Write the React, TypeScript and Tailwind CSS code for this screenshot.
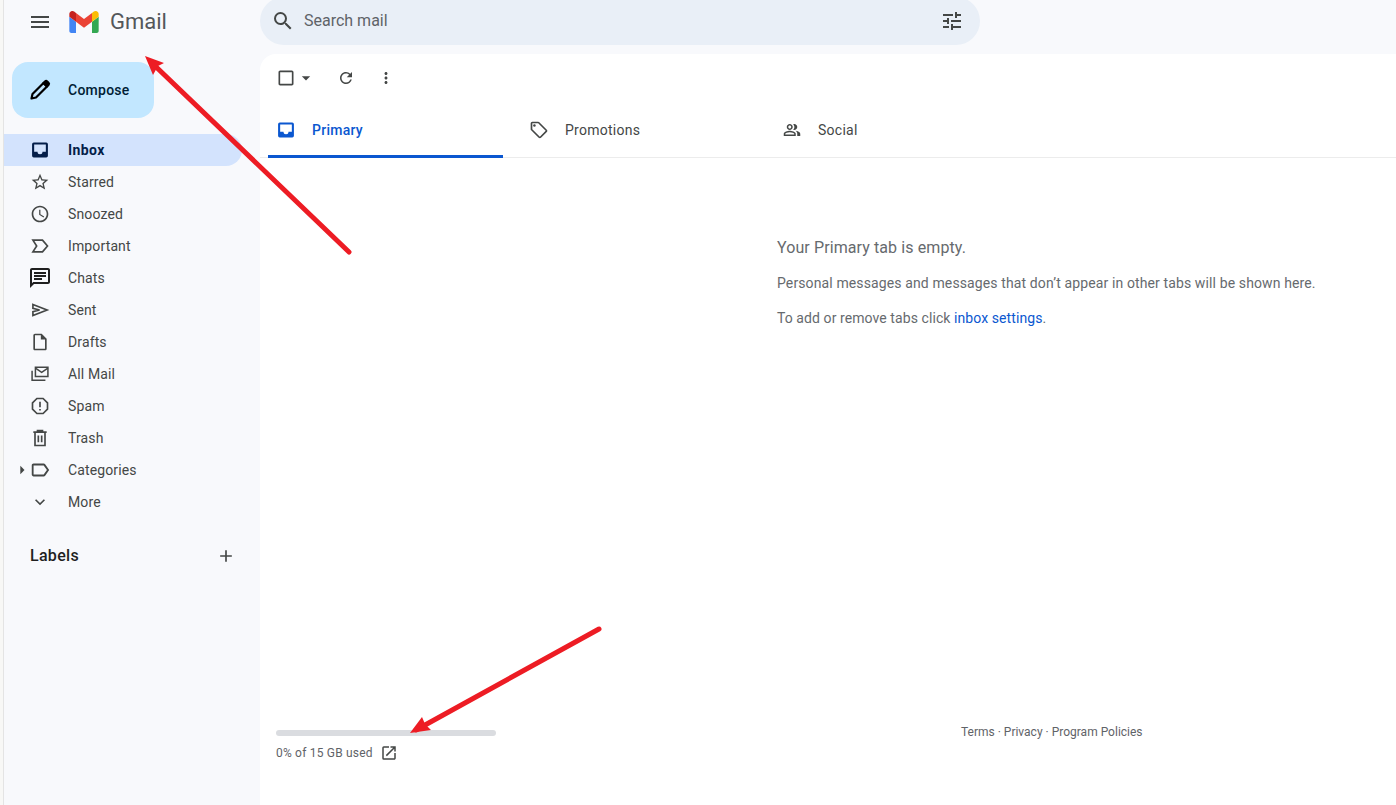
import React from 'react'
import {
  MdMenu,
  MdSearch,
  MdTune,
  MdStarBorder,
  MdOutlineAccessTime,
  MdOutlineChat,
  MdOutlineInsertDriveFile,
  MdOutlineLabel,
  MdExpandMore,
  MdAdd,
  MdCheckBoxOutlineBlank,
  MdArrowDropDown,
  MdRefresh,
  MdMoreVert,
  MdOutlineLocalOffer,
  MdOutlinePeopleAlt,
  MdOpenInNew,
  MdArrowRight,
} from 'react-icons/md'

const GmailLogo = () => (
  <svg viewBox="52 42 88 66" className="w-[30px] h-[22px]">
    <path fill="#4285f4" d="M58 108h14V74L52 59v43c0 3.32 2.69 6 6 6" />
    <path fill="#34a853" d="M120 108h14c3.32 0 6-2.69 6-6V59l-20 15" />
    <path fill="#fbbc04" d="M120 48v26l20-15v-8c0-7.42-8.47-11.65-14.4-7.2" />
    <path fill="#ea4335" d="M72 74V48l24 18 24-18v26L96 92" />
    <path fill="#c5221f" d="M52 51v8l20 15V48l-5.6-4.2c-5.94-4.45-14.4-.22-14.4 7.2" />
  </svg>
)

const PencilIcon = () => (
  <svg viewBox="0 0 24 24" className="w-6 h-6" fill="none" stroke="#000" strokeWidth="2.2" strokeLinejoin="round">
    <path d="M3.5 20.5l1-4.5L15.5 5l3.5 3.5L8 19.5z" />
    <path fill="#000" d="M15.5 5l1.5-1.5a1.6 1.6 0 0 1 2.2 0l1.3 1.3a1.6 1.6 0 0 1 0 2.2L19 8.5z" />
  </svg>
)

const InboxIcon = ({ color, bg }: { color: string; bg: string }) => (
  <svg viewBox="0 0 24 24" className="w-5 h-5">
    <path fill={color} d="M19.5 3h-15A2 2 0 0 0 2.5 5v14a2 2 0 0 0 2 2h15a2 2 0 0 0 2-2V5a2 2 0 0 0-2-2z" />
    <path fill={bg} d="M5 5.5h14V14h-4a3 3 0 0 1-6 0H5z" />
  </svg>
)

const ImportantIcon = () => (
  <svg viewBox="0 0 24 24" className="w-5 h-5" fill="none" stroke="#444746" strokeWidth="2">
    <path d="M3.5 5h11.5l6 7-6 7H3.5l4.5-7z" />
  </svg>
)

const SentIcon = () => (
  <svg viewBox="0 0 24 24" className="w-5 h-5" fill="none" stroke="#444746" strokeWidth="2">
    <path d="M3.5 5.5l17 6.5-17 6.5v-4.5l8-2-8-2z" />
  </svg>
)

const AllMailIcon = () => (
  <svg viewBox="0 0 24 24" className="w-[22px] h-[22px]" fill="none" stroke="#444746" strokeWidth="1.8">
    <path d="M6.5 4h15v11h-15z" />
    <path d="M6.5 5l7.5 5 7.5-5" />
    <path d="M2.5 8v11.5h16" />
  </svg>
)

const SpamIcon = () => (
  <svg viewBox="0 0 24 24" className="w-5 h-5" fill="none" stroke="#444746" strokeWidth="2">
    <path d="M8.3 3h7.4L21 8.3v7.4L15.7 21H8.3L3 15.7V8.3z" />
    <path d="M12 7v6.5M12 15.5v2" />
  </svg>
)

const TrashIcon = () => (
  <svg viewBox="0 0 24 24" className="w-5 h-5" fill="none" stroke="#444746" strokeWidth="2">
    <path d="M4 5h16M9 5V3h6v2M6 5v16h12V5" />
    <path d="M10 9v8M14 9v8" />
  </svg>
)

type NavItem = { label: string; icon: React.ReactNode; active?: boolean; caret?: boolean }

const icon = 'w-5 h-5 shrink-0 text-[#444746]'

const navItems: NavItem[] = [
  { label: 'Inbox', icon: <InboxIcon color="#041e49" bg="#d3e3fd" />, active: true },
  { label: 'Starred', icon: <MdStarBorder className={icon} /> },
  { label: 'Snoozed', icon: <MdOutlineAccessTime className={icon} /> },
  { label: 'Important', icon: <ImportantIcon /> },
  { label: 'Chats', icon: <MdOutlineChat className="w-6 h-6 shrink-0 text-[#1f1f1f]" /> },
  { label: 'Sent', icon: <SentIcon /> },
  { label: 'Drafts', icon: <MdOutlineInsertDriveFile className={icon} /> },
  { label: 'All Mail', icon: <AllMailIcon /> },
  { label: 'Spam', icon: <SpamIcon /> },
  { label: 'Trash', icon: <TrashIcon /> },
  { label: 'Categories', icon: <MdOutlineLabel className="w-[22px] h-[22px] shrink-0 text-[#444746]" />, caret: true },
  { label: 'More', icon: <MdExpandMore className={icon} /> },
]

const SidebarRow = ({ item }: { item: NavItem }) => (
  <div
    className={`relative h-8 flex items-center pl-[26px] rounded-r-full text-sm ${
      item.active ? 'bg-[#d3e3fd] font-bold tracking-[0.4px] text-[#041e49]' : 'tracking-[0.13px] text-[#444746]'
    }`}
  >
    {item.caret && <MdArrowRight className="absolute left-[8px] w-5 h-5 text-[#444746]" />}
    <span className="w-5 h-5 flex items-center justify-center shrink-0">{item.icon}</span>
    <span className="ml-[18px]">{item.label}</span>
  </div>
)

const Tab = ({ icon, label, active }: { icon: React.ReactNode; label: string; active?: boolean }) => (
  <div
    className={`w-[235px] mr-[18px] h-[52px] pb-[2px] flex items-center pl-2 text-sm tracking-[0.25px] border-b-[3px] ${
      active ? 'border-[#0b57d0] text-[#0b57d0] font-medium' : 'border-transparent text-[#444746]'
    }`}
  >
    <span className="w-5 h-5 flex items-center justify-center">{icon}</span>
    <span className="ml-4">{label}</span>
  </div>
)

const Arrows = () => (
  <svg className="absolute inset-0 pointer-events-none" width="1396" height="805" viewBox="0 0 1396 805">
    <path d="M349 252L152 63" stroke="#ed1c24" strokeWidth="5" strokeLinecap="round" />
    <path d="M145 56l19 7-6 3-5 9z" fill="#ed1c24" />
    <path d="M599 629L416 730" stroke="#ed1c24" strokeWidth="5" strokeLinecap="round" />
    <path d="M410 733l12-16 3 7 6 6z" fill="#ed1c24" />
  </svg>
)

export default function App() {
  return (
    <div className="relative w-[1396px] h-[805px] overflow-hidden flex bg-[#f8f9fc] font-['Roboto',sans-serif]">
      <div className="w-[4px] border-r border-[#e4e4e4] bg-[#f8f8f6] shrink-0" />
      <div className="flex-1 flex flex-col min-w-0">
        {/* top bar */}
        <header className="h-[54px] flex items-start shrink-0">
          <div className="w-[256px] h-[44px] flex items-center">
            <MdMenu className="w-6 h-6 ml-6 text-[#444746]" />
            <span className="ml-[17px]">
              <GmailLogo />
            </span>
            <span className="ml-[11px] text-[22px] leading-none text-[#54575a]">Gmail</span>
          </div>
          <div className="w-[720px] h-[48px] -mt-[3px] rounded-full bg-[#e9eff7] flex items-center pl-[11px] pr-4 text-[#444746]">
            <MdSearch className="w-6 h-6" />
            <span className="ml-[9px] text-base text-[#5f6368]">Search mail</span>
            <MdTune className="w-6 h-6 ml-auto" />
          </div>
        </header>

        <div className="flex-1 flex min-h-0">
          {/* sidebar */}
          <aside className="w-[256px] shrink-0 pt-2">
            <div className="ml-2 w-[142px] h-14 rounded-2xl bg-[#c2e7ff] flex items-center pl-[16px] text-sm font-medium tracking-[0.25px] text-[#001d35]">
              <PencilIcon />
              <span className="ml-4">Compose</span>
            </div>
            <nav className="mt-4 w-[238px]">
              {navItems.map((item) => (
                <SidebarRow key={item.label} item={item} />
              ))}
            </nav>
            <div className="mt-[22px] w-[232px] h-8 pl-[26px] flex items-center justify-between">
              <span className="text-base font-medium tracking-[0.3px] text-[#1f1f1f]">Labels</span>
              <MdAdd className="w-5 h-5 text-[#444746]" />
            </div>
          </aside>

          {/* main panel */}
          <main className="flex-1 bg-white rounded-tl-2xl flex flex-col min-w-0">
            <div className="h-[48px] mb-[4px] shrink-0 flex items-center pl-4 text-[#444746]">
              <MdCheckBoxOutlineBlank className="w-5 h-5" />
              <MdArrowDropDown className="w-5 h-5" />
              <MdRefresh className="w-[18px] h-[18px] ml-[21px]" />
              <MdMoreVert className="w-[18px] h-[18px] ml-[22px]" />
            </div>
            <div className="flex pl-2 border-b border-[#ececec] h-[52px] shrink-0">
              <Tab active icon={<InboxIcon color="#0b57d0" bg="#ffffff" />} label="Primary" />
              <Tab icon={<MdOutlineLocalOffer className="w-5 h-5" />} label="Promotions" />
              <Tab icon={<MdOutlinePeopleAlt className="w-[18px] h-[18px]" />} label="Social" />
            </div>

            <div className="pl-[517px] pt-[80px] text-[#666a6e]">
              <p className="text-base leading-5 tracking-[0.1px]">Your Primary tab is empty.</p>
              <p className="mt-[15px] text-sm leading-5 tracking-[0.12px]">
                Personal messages and messages that don&rsquo;t appear in other tabs will be shown here.
              </p>
              <p className="mt-[15px] text-sm leading-5 tracking-[0.08px]">
                To add or remove tabs click <span className="text-[#0b57d0]">inbox settings</span>.
              </p>
            </div>

            <footer className="mt-auto mb-[43px] flex items-start pl-4 text-xs text-[#5f6368]">
              <div className="w-[220px]">
                <div className="h-[6px] rounded-full bg-[#dadce0]" />
                <div className="mt-2 flex items-center">
                  <span className="tracking-[0.2px]">0% of 15 GB used</span>
                  <MdOpenInNew className="w-[18px] h-[18px] ml-[7px] text-[#444746]" />
                </div>
              </div>
              <div className="ml-[465px] -mt-[6px] leading-4">Terms · Privacy · Program Policies</div>
            </footer>
          </main>
        </div>
      </div>
      <Arrows />
    </div>
  )
}
